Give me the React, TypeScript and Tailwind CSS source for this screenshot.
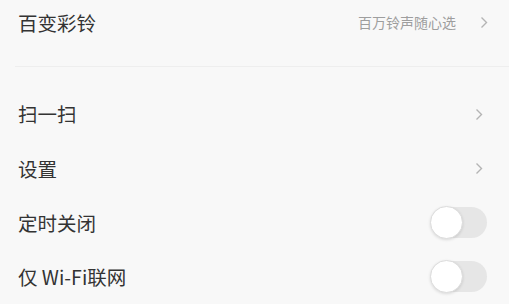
import React from 'react';

const Chevron: React.FC = () => (
    <svg width="8" height="13" viewBox="0 0 8 13" className="flex-none">
        <polyline points="1.5,1.5 6.5,6.5 1.5,11.5" fill="none" stroke="#b4b4b4" strokeWidth="1.4" />
    </svg>
);

const Toggle: React.FC = () => (
    <div className="relative w-[56px] h-[31px] rounded-full bg-[#e6e6e6] flex-none">
        <div className="absolute -left-[1px] -top-[1px] w-[33px] h-[33px] rounded-full bg-white border border-[#dcdcdc] shadow-[0_1px_3px_rgba(0,0,0,0.12)]" />
    </div>
);

interface RowProps {
    label: string;
    right: React.ReactNode;
    pr?: string;
}

const Row: React.FC<RowProps> = ({ label, right, pr = 'pr-[26px]' }) => (
    <div className={`h-[55px] flex items-center justify-between pl-[18px] ${pr}`}>
        <span className="text-[19.5px] text-[#333333]">{label}</span>
        {right}
    </div>
);

export default function App() {
    return (
        <div
            className="w-[529px] h-[304px] bg-white overflow-hidden flex"
            style={{ fontFamily: '"Noto Sans CJK SC", "Noto Sans", sans-serif' }}
        >
            <div className="w-[509px] h-full bg-[#f8f8f8] flex flex-col">
                {/* Ringtone */}
                <div className="h-[46px] flex items-center justify-between pl-[18px] pr-[21px]">
                    <span className="text-[19.5px] text-[#333333]">百变彩铃</span>
                    <div className="flex items-center gap-[24px]">
                        <span className="text-[14px] text-[#9e9e9e]">百万铃声随心选</span>
                        <Chevron />
                    </div>
                </div>
                <div className="h-[21px]" />
                <div className="ml-[15px] h-px bg-[#eeeeee]" />
                <div className="h-[20px]" />

                <Row label="扫一扫" right={<Chevron />} />
                <Row label="设置" right={<Chevron />} />
                <Row label="定时关闭" right={<Toggle />} pr="pr-[22px]" />
                <Row label="仅 Wi-Fi联网" right={<Toggle />} pr="pr-[22px]" />
            </div>
        </div>
    );
}
